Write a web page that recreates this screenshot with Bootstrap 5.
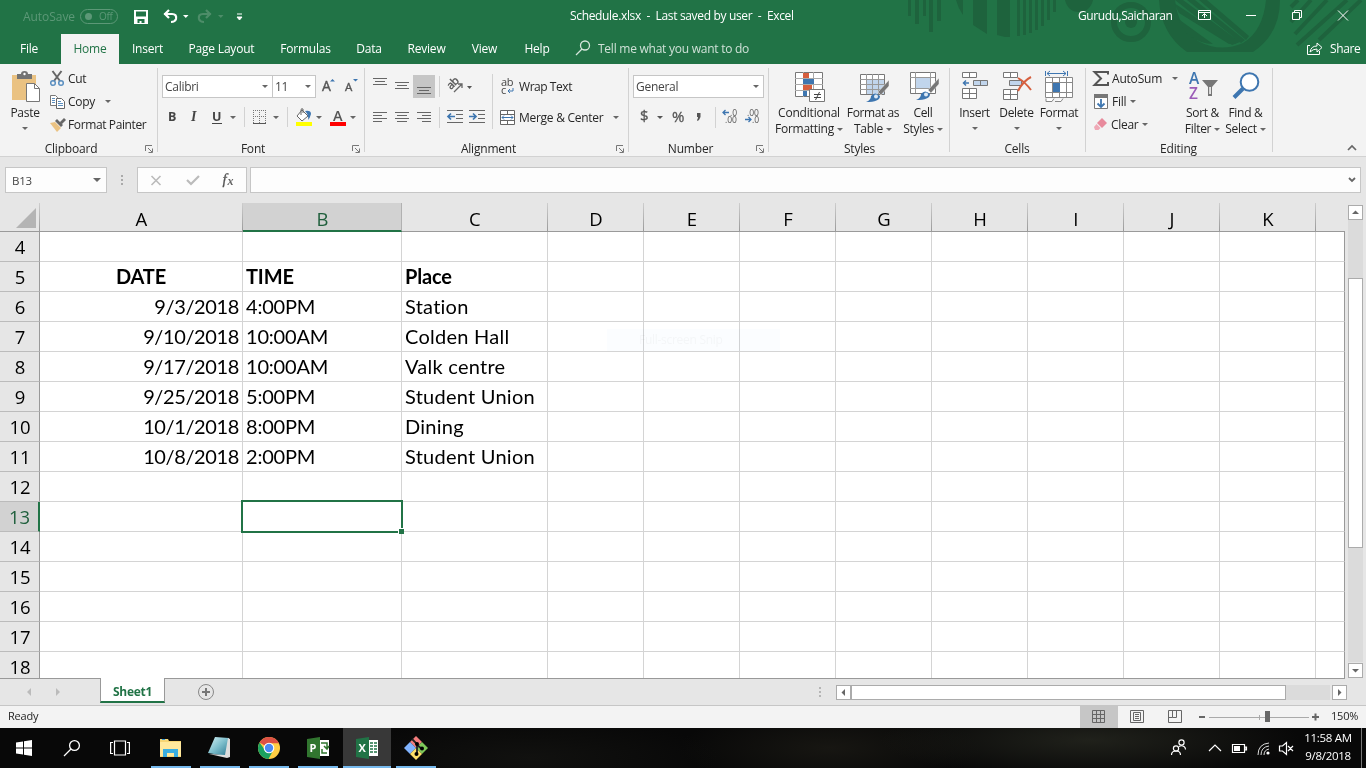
<!DOCTYPE html>
<html lang="en">
<head>
<meta charset="utf-8">
<title>Schedule.xlsx - Excel</title>
<meta name="viewport" content="width=device-width, initial-scale=1">
<link href="https://cdn.jsdelivr.net/npm/bootstrap@5.3.0/dist/css/bootstrap.min.css" rel="stylesheet">
<style>
html,body{height:768px;overflow:hidden}
body{font:12px/16px "Open Sans","Liberation Sans",sans-serif;color:#262626;background:#e6e6e6;width:1366px;letter-spacing:-.28px;white-space:nowrap}
svg{display:block;flex:none;overflow:visible}
.xl-top{height:64px;background:#217346;color:#fff}
.xl-decor{left:900px;top:0}
.xl-titlebar{height:34px}
.xl-titlebar>*,.xl-tabs>*{flex:none}
.xl-tabs{height:30px}
.xl-tab{height:30px;line-height:30px;text-align:center;letter-spacing:-.2px}
.xl-tab.active{background:#f3f3f3;color:#217346}
.dim{color:#5c9877}
.toggle-pill{width:38px;height:15px;border:1px solid #5c9877;border-radius:8px;font-size:10px;line-height:13px}
.ribbon{height:93px;background:#f3f3f3;border-bottom:1px solid #d2d2d2}
.rgroup{flex:none;height:92px;position:relative}
.rgroup::after{content:"";position:absolute;right:0;top:4px;height:84px;width:1px;background:#d2d2d2}
.rbody{height:76px}
.rlabel{height:16px;text-align:center;line-height:17px;letter-spacing:-.2px}
.launch{position:absolute;right:5px;bottom:3px}
.caret{display:inline-block;flex:none;width:0;height:0;border:3px solid transparent;border-top:3px solid #666;border-bottom:0}
.fld{height:23px;border:1px solid #c6c6c6;background:#fff;color:#444;line-height:21px;padding-left:2px;position:relative}
.fld .caret{position:absolute;right:4px;top:9px}
.bigbtn{flex:none;text-align:center;height:76px}
.bigbtn svg{margin:0 auto}
.bigbtn .caret{margin-left:3px}
.fbar{height:46px;padding:10px 5px 0 5px}
.fbox{height:26px;border:1px solid #c6c6c6;background:#fdfdfd;flex:none}
.sheet{width:1345px;height:476px;display:grid;grid-template-columns:40px 203px 159px 146px repeat(8,96px) 29px;grid-template-rows:29px repeat(15,30px);overflow:hidden;border-bottom:1px solid #999;font-family:Lato,"Open Sans",sans-serif;font-size:20px;line-height:28px;letter-spacing:.1px;font-variant-ligatures:none;color:#000}
.hd{background:#e6e6e6;text-align:center;font-family:"Open Sans",sans-serif;font-weight:400;font-size:18.5px;line-height:30px;border-right:1px solid #b1b1b1;border-bottom:1px solid #999}
.hd.rowh{border-right-color:#999;border-bottom-color:#bbb;letter-spacing:-.2px;padding-left:1px}
.hd.col-h{line-height:31px;padding-left:1px;border-image:linear-gradient(#cfcfcf,#999) 1}
.hd.on{background:#d2d2d2;color:#1f5f3c}
.hd.col-h.on{border-image:none;border-bottom:2px solid #217346}
.hd.rowh.on{border-right:2px solid #217346}
.cl{background:#fff;border-right:1px solid #d4d4d4;border-bottom:1px solid #d4d4d4;padding:0 3px;position:relative}
.cl.edge{border-right-color:#999}
.cl.dt{letter-spacing:-.38px}
.cl.tm{letter-spacing:-.2px}
.cl.pl{letter-spacing:.25px}
.cl.fw-bold{letter-spacing:-.15px}
.sel{position:absolute;left:-2px;top:-2px;right:-2px;bottom:-2px;border:2px solid #217346;z-index:2}
.sel i{position:absolute;right:-3px;bottom:-3px;width:6px;height:6px;background:#217346;border:solid #fff;border-width:1px 0 0 1px}
.vscroll{width:21px;height:475px;position:relative}
.sbtn{width:15px;height:15px;background:#fff;border:1px solid #ababab;flex:none}
.strack{background:#dbdbdb}
.sthumb{background:#fff;border:1px solid #ababab}
.sheetbar{height:27px;border-bottom:1px solid #c6c6c6}
.sheettab{width:65px;height:25px;margin-top:-1px;background:#fff;border:solid #999;border-width:0 1px;border-bottom:2px solid #217346;color:#217346;font-weight:700;text-align:center;line-height:27px;position:relative}
.status{height:22px;background:#f3f3f3;font-size:11px;line-height:20px;letter-spacing:-.2px}
.status>*{flex:none}
.taskbar{height:40px;background:radial-gradient(ellipse 190px 40px at 530px 30px,#11110f,transparent),radial-gradient(ellipse 210px 38px at 1090px 12px,#20211b,transparent),radial-gradient(ellipse 150px 40px at 830px 20px,#171612,transparent),#080808;color:#fff}
.tbi{width:40px;height:40px;flex:none;display:flex;align-items:center;justify-content:center}
.tbi.run{border-bottom:2px solid #76b9ed;padding-top:2px}
.snip{left:607px;top:329px;width:173px;height:22px;background:#fbfdff;color:#f4f6f8;line-height:22px;padding-left:32px;z-index:3;mix-blend-mode:multiply}
</style>
</head>
<body>
<header class="xl-top position-relative">
<svg class="xl-decor position-absolute" width="466" height="64" style="overflow:hidden"><g fill="#1e633d"><path d="M8 0h3v16h-3zM15 0h4v24h-4zM23 0h3v16h-3zM29 0h4v32h-4zM37 0h4v21h-4zM56 0h7v15q-5-7-7-15M73 0h14v34l-14-9zM97 0h13v37h-5l-8-2zM117 0h3v36h-3zM123 0h3v35h-3zM129 0h3v33h-3zM135 0h3v30h-3zM141 0h3v26h-3zM147 0h3v20h-3zM153 0h3v12h-3zM165 0h28q-3 12-14 12t-14-12"/><path d="M259 0h16q3 28 23 41 22 12 45 2 20-12 23-43h14q0 34-27 52h-66Q261 34 259 0"/><path d="M274 3l62 41h-7l-50-31zM275 0h8l57 42-8 3zM287 0h8l50 40-4 3zM299 0h8l42 36-3 4zM277 18l36 26q-25-1-36-26"/><circle cx="231" cy="22" r="6"/></g><g fill="none" stroke="#1e633d"><circle cx="231" cy="22" r="17" stroke-width="6"/><path d="M398 0l-7 7M411 0l-20 22M427 0l-32 34M447 0l-50 45M461 0l-42 40" stroke-width="4"/></g></svg>
<div class="xl-titlebar d-flex position-relative">
 <div class="dim" style="margin:9px 0 0 23px;width:57px;letter-spacing:-.05px">AutoSave</div>
 <div class="toggle-pill dim d-flex" style="margin-top:9px"><span class="rounded-circle" style="width:7px;height:7px;margin:3px 7px 0 4px;background:#5c9877"></span>Off</div>
 <svg width="14" height="14" style="margin:10px 0 0 16px"><path fill="#fff" fill-rule="evenodd" d="M0 0h14v14H0zM2 1.500v5h10v-5zM3.500 9v4h2v-2h2v2h3V9z"/></svg>
 <svg width="24" height="14" style="margin:9px 0 0 15px"><path d="M1 5h8q5 0 4 5-1 3-5 3M6 1L2 5l4 4" fill="none" stroke="#fff" stroke-width="2.200"/><path d="M20 6h5.500l-2.700 3z" fill="#fff"/></svg>
 <svg width="26" height="14" style="margin:9px 0 0 11px"><path d="M13 5H5q-5 0-4 5 1 3 5 3M8 1l4 4-4 4" fill="none" stroke="#4d8d69" stroke-width="2.200"/><path d="M20 6h5.500l-2.700 3z" fill="#4d8d69"/></svg>
 <svg width="6" height="8" style="margin:13px 0 0 13px"><path d="M0 1h5M0 4h5L2.500 7z" stroke="#fff" fill="#fff"/></svg>
 <div style="margin:8px 0 0 327px;width:226px;letter-spacing:-.34px">Schedule.xlsx &nbsp;- &nbsp;Last saved by user &nbsp;- &nbsp;Excel</div>
 <div style="margin:8px 0 0 282px;width:94px;letter-spacing:-.42px">Gurudu,Saicharan</div>
 <svg width="168" height="20" style="margin:5px 0 0 26px" fill="none" stroke="#fff"><path d="M.5 5.500h12v9H.5zM.5 7.500h12M6.500 13V8.500M4 11l2.500-2.500L9 11M48 10.500h10M94.500 7.500h7v7h-7zM96.500 7.500v-2h7v7h-2M140 5.500l10 10M150 5.500l-10 10"/></svg>
</div>
<nav class="xl-tabs d-flex position-relative">
 <div class="xl-tab" style="width:58px">File</div><div class="xl-tab active" style="width:58px;margin-left:3px">Home</div><div class="xl-tab" style="width:57px">Insert</div><div class="xl-tab" style="width:91px">Page Layout</div><div class="xl-tab" style="width:77px">Formulas</div><div class="xl-tab" style="width:50px">Data</div><div class="xl-tab" style="width:65px">Review</div><div class="xl-tab" style="width:51px">View</div><div class="xl-tab" style="width:54px">Help</div>
 <svg width="15" height="16" style="margin:6px 0 0 12px" fill="none" stroke="#d5e6dc" stroke-width="1.300"><circle cx="9" cy="5.500" r="4.500"/><path d="M6 9L0 15"/></svg>
 <div style="margin:7px 0 0 7px;width:153px;color:#cfe1d7;letter-spacing:-.25px">Tell me what you want to do</div>
 <svg width="16" height="14" style="margin:8px 0 0 556px" fill="none" stroke="#fff"><path d="M3 3.500H.5v9h12V9M3 10q1-6 7-6V1l5 4.500-5 4.500V7Q6 7 3 10z"/></svg>
 <div style="margin:7px 0 0 7px;letter-spacing:-.4px">Share</div>
</nav>
</header>

<section class="ribbon d-flex">
 <div class="rgroup" style="width:158px">
  <div class="rbody d-flex">
   <div class="bigbtn" style="width:50px;padding-top:7px"><svg width="29" height="32"><path fill="#eac282" d="M1 4h24v25H1z"/><path fill="#737373" d="M6 3h4q0-3 3.500-3T17 3h4v5H6z"/><circle cx="13.500" cy="3" r="1.200" fill="#fff"/><path d="M15.500 12.500h8l5 5v13h-13z" fill="#fff" stroke="#777"/><path d="M23.500 12.500v5h5" fill="none" stroke="#777"/></svg><div style="margin-top:2px">Paste</div><span class="caret d-block mx-auto" style="margin-top:6px"></span></div>
   <div class="d-flex flex-column" style="padding-top:3px">
    <div class="d-flex align-items-center" style="height:23px"><svg width="14" height="15" fill="none" stroke="#5b8fc0" stroke-width="1.500"><path d="M2.500 0l7.500 10M11.500 0L4 10" stroke="#666" stroke-width="2"/><circle cx="3" cy="12" r="2.300"/><circle cx="11" cy="12" r="2.300"/></svg><span style="margin-left:4px">Cut</span></div>
    <div class="d-flex align-items-center" style="height:23px"><svg width="15" height="14"><path d="M.5.5h5l2 2v8h-7z" fill="#fff" stroke="#777"/><path d="M6.500 3.500h5l3 3v7h-8z" fill="#fff" stroke="#666"/><path d="M2 3.500h3M2 5.500h3M2 7.500h3M8 6.500h3M8 8.500h5M8 10.500h5" stroke="#5b8fc0"/></svg><span style="margin-left:3px">Copy</span><span class="caret" style="margin-left:10px"></span></div>
    <div class="d-flex align-items-center" style="height:23px"><svg width="16" height="14"><path d="M0 5l5-1 6 6-4 4z" fill="#eac282"/><path d="M5 3l2-2 6 6-2 2zM10 4l4-4 2 2-4 4z" fill="#666"/></svg><span style="margin-left:2px;letter-spacing:-.38px">Format Painter</span></div>
   </div>
  </div>
  <div class="rlabel" style="padding-right:16px">Clipboard</div><svg class="launch" width="8" height="8"><path d="M.5 6V.5H7M3 3l4 4M7.500 3.500v4h-4" fill="none" stroke="#777"/></svg>
 </div>
 <div class="rgroup" style="width:207px">
  <div class="rbody" style="padding-left:4px">
   <div class="d-flex" style="padding-top:11px"><div class="fld" style="width:111px">Calibri<span class="caret"></span></div><div class="fld" style="width:44px;margin-left:-1px">11<span class="caret"></span></div>
   <svg width="36" height="20" style="margin:1px 0 0 6px" fill="#555"><text x="0" y="15" font-size="14" stroke="#555" stroke-width=".4">A</text><text x="23" y="15" font-size="11.500" stroke="#555" stroke-width=".4">A</text><path d="M8 5.500L10.500 3 13 5.500zM31 3h5l-2.500 2.500z" fill="#3e76b0"/></svg></div>
   <div class="d-flex align-items-center" style="height:24px;margin-top:7px">
    <svg width="198" height="24"><g fill="#444" font-size="12.500" font-weight="700"><text x="6" y="16">B</text><text x="29" y="16" font-family="Liberation Serif" font-style="italic" font-size="14">I</text><text x="50" y="16">U</text></g><path d="M50 18.500h10" stroke="#444"/><path d="M68 11h6l-3 3zM111 11h6l-3 3zM154 11h6l-3 3zM188 11h6l-3 3z" fill="#666"/><path d="M82.500 2v20M125.500 2v20" stroke="#d2d2d2"/><path d="M91.500 5v13M103.500 5v13M91 5.500h13M97.500 5v13M91 11.500h13" stroke="#777" stroke-dasharray="1 1"/><path d="M91 18.500h13" stroke="#555"/><path d="M140 5l6 6-6 5-5-5zM139 10V5q0-2 2-1v4" stroke="#666" fill="#fff"/><path d="M143 6q6-1 6 3-1 4-3 6 1-5-3-9" fill="#3e76b0"/><path d="M134 17h16v4h-16z" fill="#ff0"/><path d="M168 17h16v4h-16z" fill="red"/><text x="171" y="16" font-size="14.500" font-weight="600" fill="#555">A</text></svg>
   </div>
  </div>
  <div class="rlabel" style="padding-right:17px">Font</div><svg class="launch" width="8" height="8"><path d="M.5 6V.5H7M3 3l4 4M7.500 3.500v4h-4" fill="none" stroke="#777"/></svg>
 </div>
 <div class="rgroup" style="width:264px">
  <div class="rbody d-flex">
   <svg width="128" height="70" fill="none" stroke="#666"><path fill="#c6c6c6" stroke="none" d="M48 11h22v23H48z"/><path d="M8 14.500h14M10 17.500h10M8 20.500h14M30 18.500h14M32 21.500h10M30 24.500h14M52 23.500h14M54 26.500h10M52 29.500h14M8 48.500h14M8 51.500h9M8 54.500h14M8 57.500h9M30 48.500h14M32 51.500h10M30 54.500h14M32 57.500h10M52 48.500h14M57 51.500h9M52 54.500h14M57 57.500h9"/><path d="M74.500 12v21M74.500 43v21M127.500 10v55" stroke="#d2d2d2"/><g fill="#555" stroke="none"><text transform="translate(86 26) rotate(-45)" font-size="11" stroke="#555" stroke-width=".4">ab</text><path d="M102 22h5l-2.500 3z"/></g><path d="M89 28l8-8M93 20h4v4" stroke-width="1.300"/><path d="M82 46.500h16M91 50.500h7M91 54.500h7M82 58.500h16M104 46.500h16M113 50.500h7M113 54.500h7M104 58.500h16"/><path d="M83 52.500h7M86 49.500l-3 3 3 3M104 52.500h7M108 49.500l3 3-3 3" stroke="#3e76b0" stroke-width="1.700"/></svg>
   <div style="padding-left:7px">
    <div class="d-flex align-items-center" style="margin-top:11px;height:23px"><svg width="14" height="18"><text x="1" y="8" font-size="11" fill="#444">ab</text><text x="1" y="16" font-size="11" fill="#444">c</text><path d="M13 10v3H8M10 11l-2 2 2 2" stroke="#3e76b0" fill="none"/></svg><span style="margin-left:5px;letter-spacing:-.45px">Wrap Text</span></div>
    <div class="d-flex align-items-center" style="margin-top:8px;height:23px"><svg width="15" height="15" fill="#fff" stroke="#666"><path d="M.5.5h14v14H.5zM.5 4.500h14M.5 10.500h14M7.500.5v4M7.500 10.500v4"/><path d="M2 7.500h11M4 5.500l-2 2 2 2M11 5.500l2 2-2 2" stroke="#3e76b0" fill="none"/></svg><span style="margin-left:4px">Merge &amp; Center</span><span class="caret" style="margin-left:10px"></span></div>
   </div>
  </div>
  <div class="rlabel" style="padding-right:17px">Alignment</div><svg class="launch" width="8" height="8"><path d="M.5 6V.5H7M3 3l4 4M7.500 3.500v4h-4" fill="none" stroke="#777"/></svg>
 </div>
 <div class="rgroup" style="width:140px">
  <div class="rbody" style="padding:11px 0 0 4px"><div class="fld" style="width:131px">General<span class="caret"></span></div>
   <svg width="132" height="30" style="margin-top:5px"><g fill="#555"><text x="7" y="18" font-size="15" stroke="#555" stroke-width=".3">$</text><path d="M24 13h6l-3 3z"/><text x="39" y="19" font-size="15" stroke="#555" stroke-width=".3">%</text><path d="M64 10h3.500v4q-1 3-3 4l-.5-1q1-1 1-3h-1z"/><path d="M82.500 4v21" stroke="#d2d2d2"/><g font-size="8.500" letter-spacing="0"><text x="97" y="12.500">.0</text><text x="92" y="20">.00</text><text x="114" y="12.500">.00</text><text x="119" y="20">.0</text></g></g><path d="M90 9.500h6M92.500 7L90 9.500l2.500 2.500M112 16.500h6M115.500 14l2.500 2.500-2.500 2.500" fill="none" stroke="#3e76b0" stroke-width="1.300"/></svg></div>
  <div class="rlabel" style="padding-right:17px">Number</div><svg class="launch" width="8" height="8"><path d="M.5 6V.5H7M3 3l4 4M7.500 3.500v4h-4" fill="none" stroke="#777"/></svg>
 </div>
 <div class="rgroup" style="width:181px">
  <div class="rbody d-flex" style="padding-left:4px">
   <div class="bigbtn" style="width:72px;padding-top:8px"><svg width="28" height="31"><path d="M.5.5h27v24H.5z" fill="#fff" stroke="#777"/><path d="M0 6.500h28M0 12.500h28M0 18.500h28M8.500 0v25M18.500 0v25" stroke="#aaa"/><path fill="#d65f3e" d="M8 1h6v5H8zM8 13h9v5H8z"/><path fill="#3e76b0" d="M8 7h11v5H8zM8 19h4v5H8z"/><path d="M14.500 17.500h15v12h-15z" fill="#fff" stroke="#777"/><path d="M19 22.500h7M19 25.500h7M24.500 20l-4 8" stroke="#444"/></svg><div style="margin-top:2px;letter-spacing:-.2px">Conditional</div><div>Formatting<span class="caret align-middle"></span></div></div>
   <div class="bigbtn" style="width:56px;padding-top:10px"><svg width="27" height="29"><path d="M.5.5h24v20H.5z" fill="#fff" stroke="#777"/><path d="M6 5h18v15H6z" fill="#c1d5ec"/><path d="M0 5.500h24M0 10.500h24M0 15.500h24M6.500 0v20M12.500 0v20M18.500 0v20" stroke="#999"/><path d="M29 6v6l-8 9-3-3z" fill="#777" stroke="#f3f3f3" stroke-width=".5"/><path d="M6 28q5-2 5-6 4-5 9 0 0 6-14 6" fill="#3e76b0"/><circle cx="16" cy="22.500" r="2" fill="#dde9f5"/></svg><div style="margin-top:2px;letter-spacing:-.4px">Format as</div><div>Table<span class="caret align-middle"></span></div></div>
   <div class="bigbtn" style="width:44px;padding-top:8px"><svg width="27" height="31"><path d="M.5.5h25v21H.5z" fill="#fff" stroke="#777"/><path d="M0 5.500h25M0 16.500h25M5.500 0v21M20.500 0v21" stroke="#999"/><path d="M6 6h14v10H6z" fill="#c1d5ec"/><path d="M29 6v6l-8 9-3-3z" fill="#777" stroke="#f3f3f3" stroke-width=".5"/><path d="M6 28q5-2 5-6 4-5 9 0 0 6-14 6" fill="#3e76b0"/><circle cx="16" cy="22.500" r="2" fill="#dde9f5"/></svg><div style="margin-top:2px">Cell</div><div>Styles<span class="caret align-middle"></span></div></div>
  </div>
  <div class="rlabel">Styles</div>
 </div>
 <div class="rgroup" style="width:136px">
  <div class="rbody d-flex" style="padding-left:4px">
   <div class="bigbtn" style="width:41px;padding-top:7px"><svg width="25" height="32" fill="#fff" stroke="#777"><path d="M.5 1.500h14v5H.5zM7.500 1.500v5M.5 17.500h14v10H.5zM7.500 17.500v10M.5 22.500h14"/><path d="M11.500 9.500h14v5h-14zM18.500 9.500v5" fill="#c1d5ec"/><path d="M1 12h6M4 9.500L1.500 12 4 14.500" stroke="#3e76b0" stroke-width="1.500" fill="none"/></svg><div style="margin-top:2px">Insert</div><span class="caret d-block mx-auto" style="margin-top:6px"></span></div>
   <div class="bigbtn" style="width:43px;padding-top:7px"><svg width="27" height="32" fill="#fff" stroke="#777"><path d="M.5 1.500h14v5H.5zM7.500 1.500v5M.5 18.500h14v10H.5zM7.500 18.500v10M.5 23.500h14"/><path d="M6.500 9.500h12v5h-12z" fill="#c1d5ec"/><path d="M15 7q7 4 13 12M28 6q-8 4-13 14" stroke="#d65f3e" stroke-width="2" fill="none"/></svg><div style="margin-top:2px">Delete</div><span class="caret d-block mx-auto" style="margin-top:6px"></span></div>
   <div class="bigbtn" style="width:42px;padding-top:7px"><svg width="28" height="32" fill="#fff" stroke="#888"><path d="M.5 6.500h27v20H.5zM.5 11.500h27M.5 21.500h27M7.500 6.500v20M14.500 6.500v20M21.500 6.500v20M1 27.500v3h6l2-3M10 30.500h6l2-3"/><path d="M8 12h7v9H8z" fill="#3e76b0" stroke="none"/><path d="M.5 0v5M22.500 0v5M2 2.500h19M5 0L2 2.500 5 5M18 0l3 2.500L18 5" fill="none" stroke="#3e76b0"/></svg><div style="margin-top:2px">Format</div><span class="caret d-block mx-auto" style="margin-top:6px"></span></div>
  </div>
  <div class="rlabel" style="padding-right:2px">Cells</div>
 </div>
 <div class="rgroup" style="width:187px">
  <div class="rbody d-flex" style="padding-left:7px">
   <div style="width:88px;padding-top:3px">
    <div class="d-flex align-items-center" style="height:23px"><svg width="16" height="15"><path d="M15 3.500V1H1.500l6.500 6.500L1.500 14H15v-3" fill="none" stroke="#555" stroke-width="2"/></svg><span style="margin-left:3px;letter-spacing:-.2px">AutoSum</span><span class="caret" style="margin-left:10px"></span></div>
    <div class="d-flex align-items-center" style="height:23px"><svg width="14" height="15" style="margin-left:1px"><path d="M.5.5h13v14H.5z" fill="#fff" stroke="#777"/><path d="M0 0h14v4H0z" fill="#777"/><path d="M7 5v8M3.500 9.500L7 13l3.500-3.500" fill="none" stroke="#3e76b0" stroke-width="1.800"/></svg><span style="margin-left:4px">Fill</span><span class="caret" style="margin-left:4px"></span></div>
    <div class="d-flex align-items-center" style="height:23px"><svg width="13" height="13" style="margin-left:1px"><path d="M8 0l5 5-5 5-5-5z" fill="#e88a9c"/><path d="M2.500 6l4 4-2 2H1L0 9z" fill="#efa9b6"/></svg><span style="margin-left:4px">Clear</span><span class="caret" style="margin-left:3px"></span></div>
   </div>
   <div class="bigbtn" style="width:43px;padding-top:8px"><svg width="30" height="31"><text x="1" y="12" font-size="15.500" font-weight="600" fill="#3e76b0">A</text><text x="1" y="27" font-size="15.500" font-weight="600" fill="#9b5cb8">Z</text><path d="M14 8h16l-6 7v9h-4v-9z" fill="#777"/><path d="M21.300 15h1.500v7h-1.500z" fill="#fff"/></svg><div style="margin-top:2px">Sort &amp;</div><div>Filter<span class="caret align-middle"></span></div></div>
   <div class="bigbtn" style="width:43px;padding-top:8px"><svg width="28" height="31"><circle cx="17.500" cy="10" r="8.800" fill="#fff" stroke="#3e76b0" stroke-width="2"/><path d="M11 16.500L2 25.500" stroke="#3e76b0" stroke-width="4"/></svg><div style="margin-top:2px">Find &amp;</div><div>Select<span class="caret align-middle"></span></div></div>
  </div>
  <div class="rlabel" style="padding-right:2px">Editing</div>
 </div>
 <svg class="ms-auto align-self-end" width="10" height="6" style="margin:0 9px 5px 0"><path d="M1 5l4-4 4 4" fill="none" stroke="#666" stroke-width="1.700"/></svg>
</section>

<section class="fbar d-flex">
 <div class="fbox d-flex align-items-center" style="width:102px;padding:1px 0 0 6px;font-size:11.500px;color:#444">B13<span class="caret" style="margin:-2px 5px 0 auto;border-width:4px 4px 0"></span></div>
 <svg width="30" height="26"><path d="M14 8h2v2h-2zM14 12h2v2h-2zM14 16h2v2h-2z" fill="#aaa"/></svg>
 <div class="fbox" style="width:110px"><svg width="108" height="24"><path d="M13.500 8l9 9M22.500 8l-9 9" fill="none" stroke="#bbb" stroke-width="1.600"/><path d="M49 12l4 4 8-8" fill="none" stroke="#bbb" stroke-width="2.200"/><text x="84.500" y="16" font-family="Liberation Serif" font-style="italic" font-size="15" fill="#555" stroke="#555" stroke-width=".3">f</text><text x="89.500" y="17" font-family="Liberation Serif" font-style="italic" font-weight="700" font-size="12" fill="#666">x</text></svg></div>
 <div class="fbox d-flex justify-content-end align-items-center" style="width:1111px;margin-left:3px"><svg width="8" height="6" style="margin-right:4px"><path d="M1 1l3 3 3-3" fill="none" stroke="#666" stroke-width="1.800"/></svg></div>
</section>

<main class="d-flex">
 <div class="sheet" id="sheet"></div>
 <div class="vscroll d-flex flex-column" style="padding:2px 0 0 3px">
  <div class="sbtn"><svg width="13" height="13"><path d="M3 8h7L6.500 4.500z" fill="#666"/></svg></div>
  <div class="strack d-flex flex-column flex-none" style="width:15px;height:444px;padding-top:58px"><div class="sthumb" style="height:270px"></div></div>
  <div class="sbtn" style="margin-top:1px"><svg width="13" height="13"><path d="M3 5h7L6.500 8.500z" fill="#666"/></svg></div>
 </div>
</main>
<div class="snip position-absolute">Full-screen Snip</div>

<section class="sheetbar d-flex">
 <svg width="100" height="26"><path d="M31 9v8l-4-4zM56 9v8l4-4z" fill="#bbb"/></svg>
 <div class="sheettab">Sheet1</div>
 <svg width="655" height="26"><circle cx="41" cy="13" r="7.500" fill="none" stroke="#888"/><path d="M37 13h8M41 9v8" stroke="#777" stroke-width="2"/></svg>
 <svg width="16" height="26"><path d="M-1 8h2v2h-2zM-1 12h2v2h-2zM-1 16h2v2h-2z" fill="#b5b5b5"/></svg>
 <div class="d-flex" style="padding-top:6px;height:21px"><div class="sbtn"><svg width="13" height="13"><path d="M8 3v7L4.500 6.500z" fill="#666"/></svg></div><div class="strack" style="width:479px"><div class="sthumb h-100" style="width:435px"></div></div><div class="sbtn" style="margin-left:2px"><svg width="13" height="13"><path d="M5 3v7l3.500-3.500z" fill="#666"/></svg></div></div>
</section>

<section class="status d-flex">
 <div style="width:1080px;padding-left:8px">Ready</div>
 <svg width="245" height="22" fill="none" stroke="#666"><path d="M0 0h38v22H0z" fill="#c6c6c6" stroke="none"/><path d="M12.500 4.500h12v12h-12zM12.500 8.500h12M12.500 12.500h12M16.500 4.500v12M20.500 4.500v12M50.500 4.500h13v12h-13zM53.500 6.500h7v8h-7zM55 8.500h4M55 10.500h4M55 12.500h4M88.500 4.500h13v12h-13zM92.500 4.500v7h-4M96.500 4.500v7h-4"/><path d="M119 11h6M232 11h7M235.500 7.500v7" stroke-width="2"/><path d="M129 11.500h100M179.500 9v5" stroke="#aaa"/><path d="M185 5h5v11h-5z" fill="#666" stroke="none"/></svg>
 <div style="margin-left:6px">150%</div>
</section>

<footer class="taskbar d-flex">
 <div class="tbi" style="width:48px"><svg width="16" height="16" fill="#fff"><path d="M0 2.500l7-1v6H0zM8 1.300L16 0v7.500H8zM0 8.500h7v6l-7-1zM8 8.500h8V16l-8-1.300z"/></svg></div>
 <div class="tbi" style="width:48px"><svg width="16" height="16" fill="none" stroke="#fff" stroke-width="1.300"><circle cx="10.500" cy="5.500" r="4.900"/><path d="M7 9L0 16"/></svg></div>
 <div class="tbi" style="width:48px"><svg width="20" height="16" fill="none" stroke="#fff" stroke-width="1.200"><path d="M4.500 1h11v14h-11zM3 2.500H.6v11H3M17 2.500h2.400v11H17"/></svg></div>
 <div class="tbi run" style="margin-left:7px"><svg width="22" height="20"><path d="M0 1h8l1 2h12v16H0z" fill="#f6d574"/><path d="M0 4h21v14H0z" fill="#ffe89c"/><path d="M2 1.500h3" stroke="#3b9dde"/><path d="M3 19v-8h15v8h-4v-4H7v4z" fill="#3aaee0"/></svg></div>
 <div class="tbi run" style="margin-left:9px"><svg width="24" height="22"><defs><linearGradient id="np" x2="1" y2="1"><stop stop-color="#d7f4f7"/><stop offset=".5" stop-color="#7cbdcb"/><stop offset="1" stop-color="#28758e"/></linearGradient></defs><path d="M7 0l14 1-3 18L0 16z" fill="url(#np)"/><path d="M20 1l2 1v18l-3 1-18-4 16 1z" fill="#ddd"/></svg></div>
 <div class="tbi run" style="margin-left:9px"><svg width="22" height="22" viewBox="-11 -11 22 22"><circle r="11" fill="#ffce44"/><path d="M0 0L-9.530-5.500A11 11 0 0 1 10-4.700H0z" fill="#dd5144"/><path d="M-9.530-5.500A11 11 0 0 0-.5 11l4.600-8.600L-4 2z" fill="#1ba15f"/><circle r="5.300" fill="#fff"/><circle r="4.200" fill="#4a8af4"/></svg></div>
 <div class="tbi run" style="margin-left:9px"><svg width="22" height="22"><path d="M12 3h10v16H12z" fill="#fff"/><path d="M14 6h6v5M17 9l3 3 2-3M20 16h-5v-4" stroke="#31752f" stroke-width="1.500" fill="none"/><path d="M0 2l13-2v22L0 20z" fill="#31752f"/><text x="2.500" y="15" font-size="11" font-weight="700" fill="#fff">P</text></svg></div>
 <div class="tbi run" style="width:48px;margin-left:5px;background:#383838"><svg width="22" height="22"><path d="M12 3h10v16H12z" fill="#fff"/><path d="M14 6h3M18 6h3M14 9h3M18 9h3M14 12h3M18 12h3M14 15h3M18 15h3" stroke="#217346" stroke-width="1.500"/><path d="M0 2l13-2v22L0 20z" fill="#217346"/><text x="2.500" y="15" font-size="11" font-weight="700" fill="#fff">X</text></svg></div>
 <div class="tbi run" style="margin-left:5px"><svg width="24" height="24"><path d="M12 0l6 6-6 6-6-6z" fill="#f37c7c"/><path d="M6 6l6 6-6 6-6-6z" fill="#80b3ff"/><path d="M18 6l6 6-6 6-6-6z" fill="#7fc85a"/><path d="M12 12l6 6-6 6-6-6z" fill="#ffe069"/><path d="M8 3l5 5v10M13 9l5 4" stroke="#222" stroke-width="1.800" fill="none"/><circle cx="13" cy="8" r="2"/><circle cx="12.500" cy="18" r="2"/><circle cx="18" cy="12.500" r="2"/></svg></div>
 <svg class="ms-auto" width="125" height="40" fill="none" stroke="#fff" stroke-width="1.200"><circle cx="6" cy="20.500" r="2.600"/><path d="M1.500 27q0-4 4.500-4t4.500 4"/><circle cx="11.500" cy="14.500" r="2.600"/><path d="M9 18.500q2.500-1.500 5 0 1.500 1 1.500 3"/><path d="M39 23l6-6 6 6"/><path d="M62.500 16.500h12v8h-12zM75 19v3h1.500v-3z"/><path d="M64 18h6v5h-6z" fill="#fff" stroke="none"/><path d="M88 27q0-11 11-12M91 27q0-8 8-9M94 27q0-5 5-6" stroke="#ddd" stroke-width="1"/><circle cx="98" cy="25" r="1.600" fill="#fff" stroke="none"/><path d="M109.500 18h3l4-3.500v12l-4-3.500h-3zM118 18l5 5M123 18l-5 5"/></svg>
 <div class="text-center" style="width:66px;padding-top:1px;line-height:18px;font-size:11.500px;margin-left:0">11:58 AM<br>9/8/2018</div>
 <div style="width:1px;background:#777;margin-right:4px"></div>
</footer>

<script>
var cols = ["A","B","C","D","E","F","G","H","I","J","K",""];
var data = {5:["DATE","TIME","Place"],6:["9/3/2018","4:00PM","Station"],7:["9/10/2018","10:00AM","Colden Hall"],8:["9/17/2018","10:00AM","Valk centre"],9:["9/25/2018","5:00PM","Student Union"],10:["10/1/2018","8:00PM","Dining"],11:["10/8/2018","2:00PM","Student Union"]};
var kinds = ["dt","tm","pl"];
var h = '<div class="hd col-h"><svg width="39" height="28"><path d="M35 5v20H15z" fill="#b4b4b4"/></svg></div>';
cols.forEach(function (c, i) { h += '<div class="hd col-h' + (c === "B" ? " on" : "") + '">' + c + '</div>'; });
h = h.replace(/<div class="hd col-h"><\/div>$/, '<div class="hd border-end-0" style="border-image:none"></div>');
for (var r = 4; r <= 18; r++) {
  h += '<div class="hd rowh' + (r === 13 ? " on" : "") + '">' + r + '</div>';
  for (var c = 0; c < 12; c++) {
    var t = data[r] && data[r][c] || "", k = "cl " + (kinds[c] || "");
    if (r === 5) k += " fw-bold" + (c === 0 ? " text-center" : "");
    else if (c === 0) k += " text-end";
    if (c === 11) k += " edge";
    if (r === 13 && c === 1) t = '<div class="sel"><i></i></div>';
    h += '<div class="' + k + '">' + t + '</div>';
  }
}
document.getElementById("sheet").innerHTML = h;
</script>
<script src="https://cdn.jsdelivr.net/npm/bootstrap@5.3.0/dist/js/bootstrap.bundle.min.js"></script>
</body>
</html>
